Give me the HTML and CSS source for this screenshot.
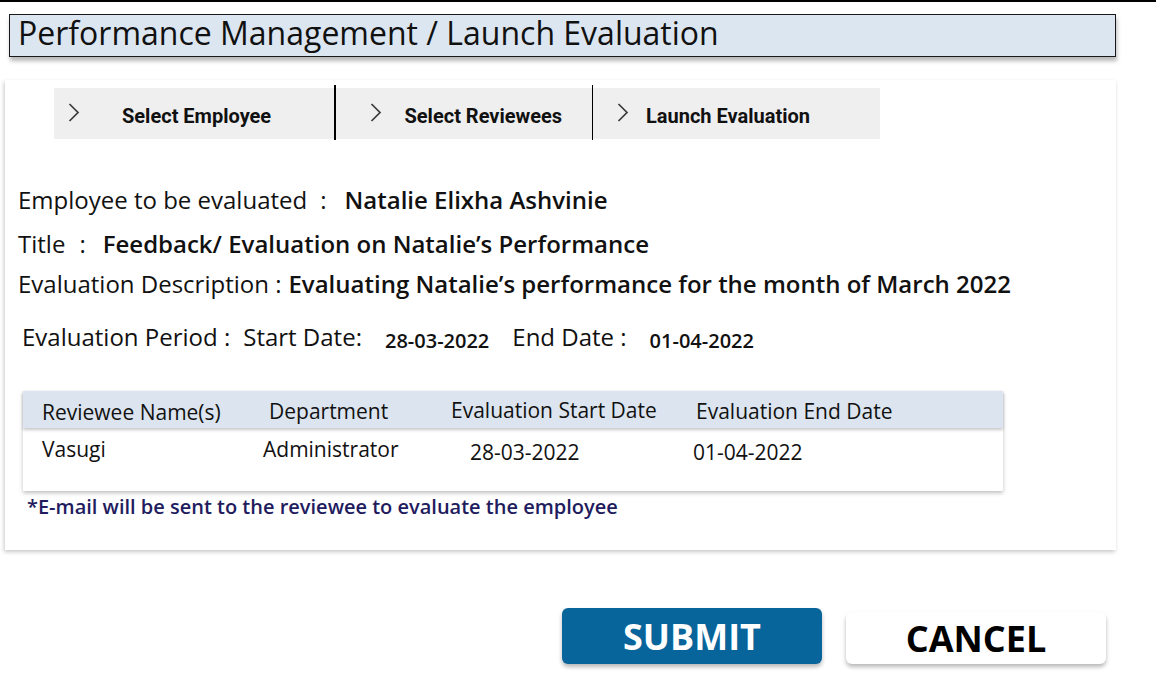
FILE: index.html
```html
<!DOCTYPE html>
<html lang="en">
<head>
<meta charset="utf-8">
<title>Launch Evaluation</title>
<link rel="stylesheet" href="styles.css">
</head>
<body>
<div class="page">
  <header class="page-title">Performance Management / Launch Evaluation</header>

  <section class="card">
    <nav class="steps">
      <div class="step step-1">
        <svg class="chev" viewBox="0 0 12 19" width="12" height="19"><path d="M1.5 1 L10 9.5 L1.5 18" fill="none" stroke="#3a3a3a" stroke-width="1.7"/></svg>
        <span class="step-label">Select Employee</span>
      </div>
      <div class="divider"></div>
      <div class="step step-2">
        <svg class="chev" viewBox="0 0 12 19" width="12" height="19"><path d="M1.5 1 L10 9.5 L1.5 18" fill="none" stroke="#3a3a3a" stroke-width="1.7"/></svg>
        <span class="step-label">Select Reviewees</span>
      </div>
      <div class="divider"></div>
      <div class="step step-3">
        <svg class="chev" viewBox="0 0 12 19" width="12" height="19"><path d="M1.5 1 L10 9.5 L1.5 18" fill="none" stroke="#3a3a3a" stroke-width="1.7"/></svg>
        <span class="step-label">Launch Evaluation</span>
      </div>
    </nav>

    <div class="info">
      <div class="info-row row-employee">
        <span class="lbl">Employee to be evaluated</span><span class="colon">:</span><span class="val">Natalie Elixha Ashvinie</span>
      </div>
      <div class="info-row row-title">
        <span class="lbl">Title</span><span class="colon">:</span><span class="val">Feedback/ Evaluation on Natalie’s Performance</span>
      </div>
      <div class="info-row row-desc">
        <span class="lbl">Evaluation Description :</span><span class="val">Evaluating Natalie’s performance for the month of March 2022</span>
      </div>
      <div class="info-row row-period">
        <span class="lbl">Evaluation Period :</span>
        <span class="lbl sub">Start Date:</span>
        <span class="date">28-03-2022</span>
        <span class="lbl sub end">End Date :</span>
        <span class="date">01-04-2022</span>
      </div>
    </div>

    <div class="table">
      <div class="thead">
        <div class="th c1">Reviewee Name(s)</div>
        <div class="th c2">Department</div>
        <div class="th c3">Evaluation Start Date</div>
        <div class="th c4">Evaluation End Date</div>
      </div>
      <div class="tbody">
        <div class="td c1">Vasugi</div>
        <div class="td c2">Administrator</div>
        <div class="td c3">28-03-2022</div>
        <div class="td c4">01-04-2022</div>
      </div>
    </div>

    <p class="note">*E-mail will be sent to the reviewee to evaluate the employee</p>
  </section>

  <div class="actions">
    <button class="btn btn-submit" type="button">SUBMIT</button>
    <button class="btn btn-cancel" type="button">CANCEL</button>
  </div>
</div>
</body>
</html>
```

FILE: styles.css
```css
* { box-sizing: border-box; }

html, body {
  margin: 0;
  padding: 0;
  background: #ffffff;
}

body {
  font-family: "Open Sans", "Noto Sans", sans-serif;
  color: #111111;
  width: 1156px;
  height: 700px;
  overflow: hidden;
}

.page {
  border-top: 2px solid #000000;
  padding-top: 12px;
}

.page-title {
  margin-left: 9px;
  width: 1107px;
  height: 43px;
  background: #dce6f0;
  border: 1.5px solid #1a1a1a;
  box-shadow: 1px 4px 4px rgba(0, 0, 0, 0.28);
  font-size: 32px;
  line-height: 36px;
  padding-left: 8px;
  color: #111111;
  font-weight: 400;
  white-space: nowrap;
}

.card {
  margin: 23px 0 0 5px;
  width: 1111px;
  height: 470px;
  background: #ffffff;
  box-shadow: -1px 2px 4px rgba(0, 0, 0, 0.22);
  padding: 8px 0 0 49px;
  position: relative;
}

/* steps */
.steps {
  display: flex;
  width: 826px;
  height: 51px;
  background: #efefef;
  align-items: center;
}

.step {
  display: flex;
  align-items: center;
  height: 100%;
  font-family: Roboto, "Liberation Sans", sans-serif;
  font-weight: 700;
  font-size: 20px;
  color: #111111;
}

.chev { flex: none; margin-top: -2px; }
.step-label { position: relative; top: 2px; }

.step-1 { width: 280px; padding-left: 14px; }
.step-1 .step-label { margin-left: 42px; }
.step-2 { width: 256px; padding-left: 34px; }
.step-2 .step-label { margin-left: 23px; }
.step-3 { flex: 1; padding-left: 24px; }
.step-3 .step-label { margin-left: 17px; }

.divider {
  align-self: stretch;
  width: 1.5px;
  background: #000000;
  margin: -3px 0 -1px;
  flex: none;
}

/* info */
.info {
  margin-left: -36px;
  padding-top: 46px;
}

.info-row {
  display: flex;
  align-items: baseline;
  font-size: 24px;
  line-height: 30px;
  white-space: nowrap;
}

.info-row .lbl { font-weight: 400; }
.info-row .val { font-weight: 600; }

.row-employee { height: 30px; }
.row-employee .colon { margin-left: 13px; }
.row-employee .val { margin-left: 18px; }

.row-title { margin-top: 14px; height: 30px; }
.row-title .colon { margin-left: 14px; }
.row-title .val { margin-left: 17px; }

.row-desc { margin-top: 10px; height: 30px; }
.row-desc .val { margin-left: 7px; }

.row-period { margin-top: 23px; margin-left: 4px; height: 30px; }
.row-period .sub { margin-left: 13px; }
.row-period .date { font-size: 20px; font-weight: 600; margin-left: 23px; position: relative; top: 2px; }
.row-period .end { margin-left: 23px; }

/* table */
.table {
  margin: 39px 0 0 -31px;
  width: 980px;
  box-shadow: 0 2px 4px rgba(0, 0, 0, 0.25);
  background: #ffffff;
}

.thead, .tbody {
  display: grid;
  grid-template-columns: 221px 188px 242px 1fr;
  padding-left: 19px;
  font-size: 21px;
  white-space: nowrap;
}

.thead {
  height: 37px;
  background: #dce5ef;
  box-shadow: 0 2px 3px rgba(0, 0, 0, 0.22);
  position: relative;
  align-items: center;
}

.th { line-height: 26px; padding-top: 5px; }
.thead .c2 { padding-left: 6px; padding-top: 3px; }
.thead .c3 { padding-top: 0; }
.thead .c4 { padding-left: 3px; padding-top: 3px; }

.tbody { height: 63px; padding-top: 8px; }
.td { line-height: 26px; }
.tbody .c3 { padding-left: 19px; padding-top: 3px; }
.tbody .c4 { padding-top: 3px; }

.note {
  margin: 2px 0 0 -27px;
  font-size: 20px;
  font-weight: 600;
  color: #221c5e;
  line-height: 28px;
}

/* actions */
.actions {
  display: flex;
  align-items: flex-end;
  gap: 24px;
  margin: 58px 0 0 562px;
}

.btn {
  font-family: "Open Sans", "Noto Sans", sans-serif;
  font-weight: 700;
  font-size: 36px;
  width: 260px;
  border: none;
  border-radius: 6px;
  box-shadow: 0 3px 4px rgba(0, 0, 0, 0.28);
  padding: 0;
  cursor: pointer;
}

.btn-submit {
  height: 56px;
  background: #07659b;
  color: #ffffff;
}

.btn-cancel {
  height: 52px;
  background: #ffffff;
  color: #000000;
}
```
